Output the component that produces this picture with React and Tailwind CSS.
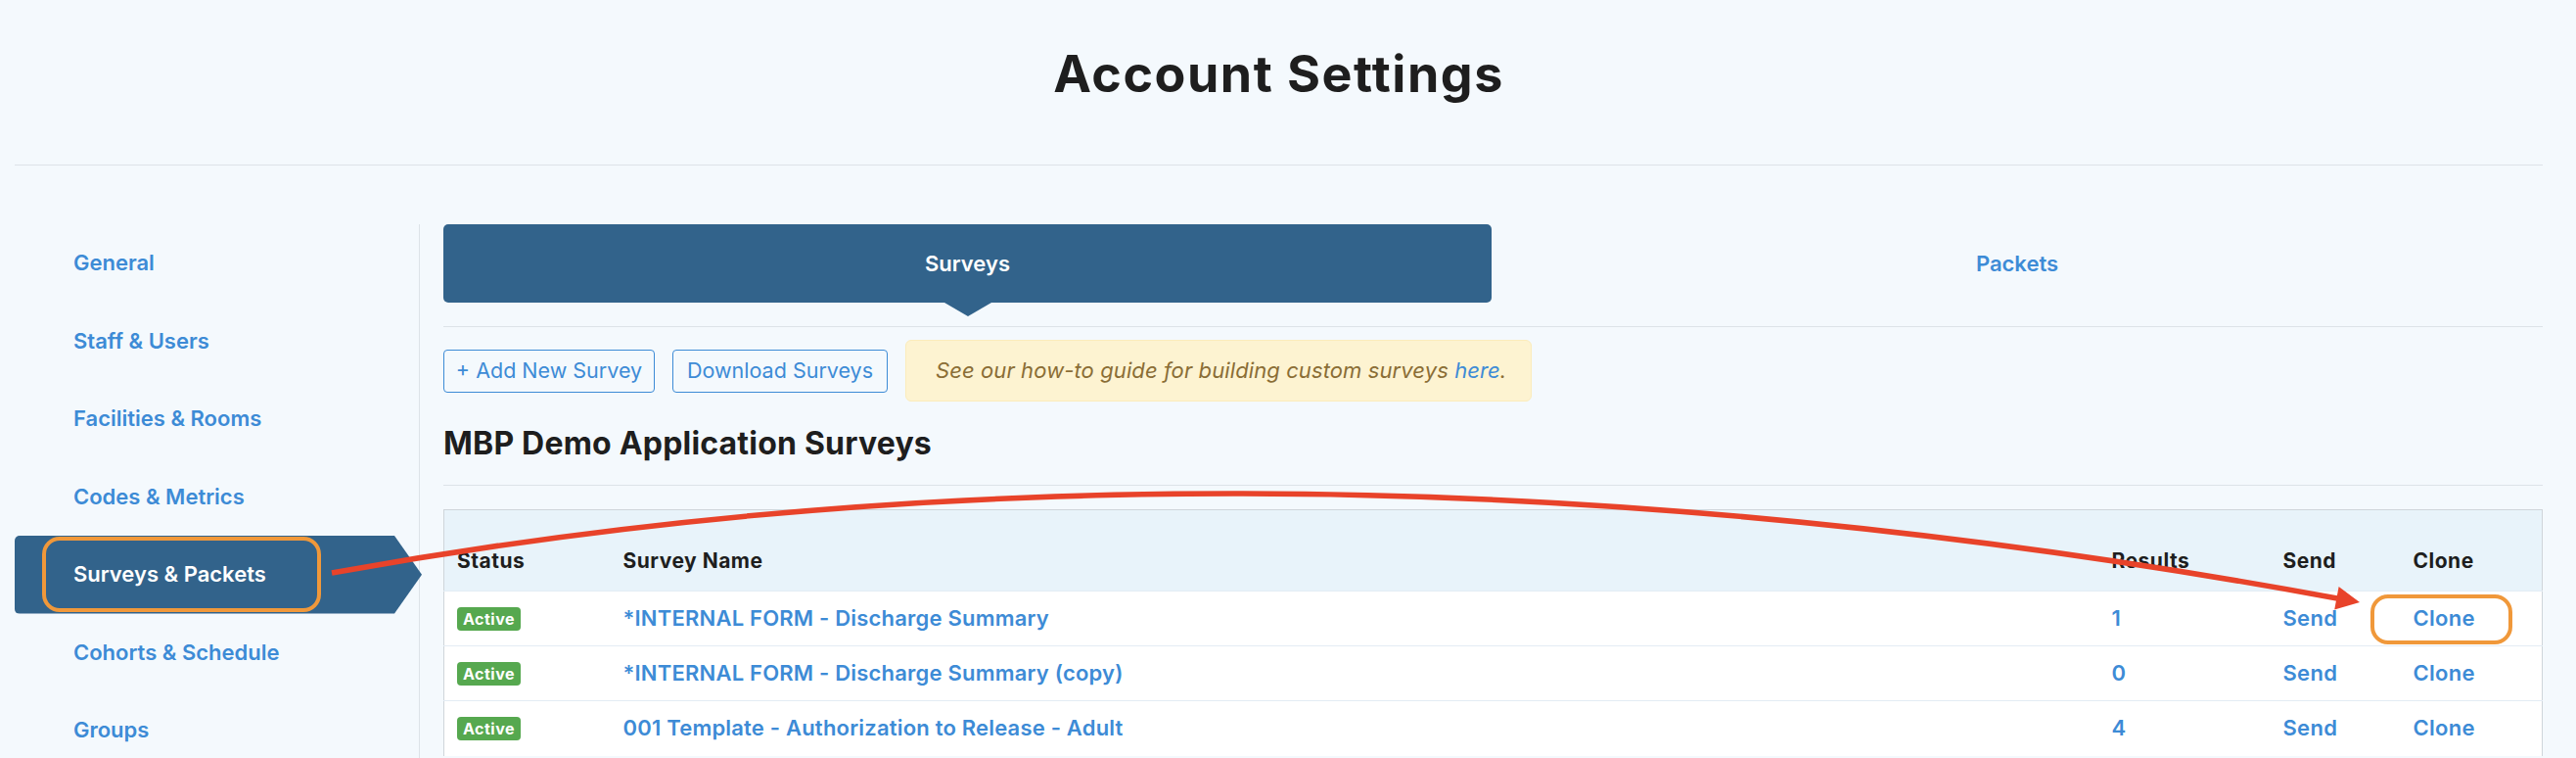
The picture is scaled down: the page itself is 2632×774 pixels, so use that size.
const nav = [
  "General",
  "Staff & Users",
  "Facilities & Rooms",
  "Codes & Metrics",
  "Surveys & Packets",
  "Cohorts & Schedule",
  "Groups",
];

const rows = [
  { name: "*INTERNAL FORM - Discharge Summary", results: "1", highlight: true },
  { name: "*INTERNAL FORM - Discharge Summary (copy)", results: "0" },
  { name: "001 Template - Authorization to Release - Adult", results: "4" },
];

function SideItem({ label }) {
  if (label === "Surveys & Packets") {
    return (
      <div className="relative flex h-[79.5px] w-[416px] items-center rounded-l-[5px] bg-[#32638b] pl-[60px] text-[22px] font-semibold text-white [clip-path:polygon(0_0,388px_0,416px_50%,388px_100%,0_100%)]">
        {label}
        <span className="absolute left-[28px] top-[1px] h-[77px] w-[285px] rounded-[18px] border-[4.5px] border-[#f0983a]" />
      </div>
    );
  }
  return (
    <div className="flex h-[79.5px] items-center pl-[60px] text-[22px] font-semibold text-[#3d8bd6]">
      {label}
    </div>
  );
}

export default function App() {
  return (
    <div className="relative h-[774px] w-[2632px] overflow-hidden bg-[#f4f9fd] text-[#1e1e1e] [font-family:Inter,'Noto_Sans',sans-serif]">
      <div className="ml-[15px] w-[2583px]">
        <header className="border-b border-[#dde3e8] pb-[66px] pt-[50px] text-center">
          <h1 className="text-[52px] font-bold leading-none tracking-[1.5px] text-[#1e1e1e]">
            Account Settings
          </h1>
        </header>

        <div className="flex pt-[60px]">
          <aside className="w-[414px] shrink-0 border-r border-[#dde3e8]">
            {nav.map((n) => (
              <SideItem key={n} label={n} />
            ))}
          </aside>

          <main className="flex-1 pl-[24px]">
            <div className="flex border-b border-[#dde3e8] pb-[24px]">
              <div className="relative flex h-[80px] w-[1071px] items-center justify-center rounded-[5px] bg-[#32638b] text-[22px] font-semibold text-white">
                Surveys
                <span className="absolute left-1/2 top-full -translate-x-1/2 border-x-[24px] border-t-[14px] border-x-transparent border-t-[#32638b]" />
              </div>
              <div className="flex h-[80px] flex-1 items-center justify-center text-[22px] font-semibold text-[#3d8bd6]">
                Packets
              </div>
            </div>

            <div className="mt-[13px] flex items-center gap-[18px]">
              <button className="h-[44px] w-[216px] rounded-[4px] border border-[#3d8bd6] text-[21.5px] text-[#3d8bd6]">
                + Add New Survey
              </button>
              <button className="h-[44px] w-[220px] rounded-[4px] border border-[#3d8bd6] text-[21.5px] text-[#3d8bd6]">
                Download Surveys
              </button>
              <div className="flex h-[63px] w-[640px] items-center rounded-[6px] border border-[#fbecbb] bg-[#fdf3d1] px-[30px]">
                <p className="whitespace-nowrap text-[22px] italic tracking-[0.1px] text-[#8a6d35]">
                  See our how-to guide for building custom surveys{" "}
                  <span className="text-[#3d8bd6]">here</span>.
                </p>
              </div>
            </div>

            <h2 className="mt-[27px] border-b border-[#dde3e8] pb-[26px] text-[32px] font-bold leading-none tracking-[0.2px] text-[#1e1e1e]">
              MBP Demo Application Surveys
            </h2>

            <table className="mt-[24px] w-[2145px] table-fixed border-collapse border-x border-t border-[#cfd5da]">
              <colgroup>
                <col className="w-[170px]" />
                <col />
                <col className="w-[175px]" />
                <col className="w-[133px]" />
                <col className="w-[145px]" />
              </colgroup>
              <thead>
                <tr className="bg-[#e8f3fa]">
                  {["Status", "Survey Name", "Results", "Send", "Clone"].map((h) => (
                    <th
                      key={h}
                      className="h-[83px] pb-[16px] pl-[13px] text-left align-bottom text-[21px] font-bold leading-[28px] tracking-[0.5px] text-[#1e1e1e]"
                    >
                      {h}
                    </th>
                  ))}
                </tr>
              </thead>
              <tbody>
                {rows.map((r) => (
                  <tr key={r.name} className="border-t border-[#e3ecf4] bg-white">
                    <td className="h-[56px] pl-[13px] align-middle">
                      <span className="inline-flex h-[24px] items-center rounded-[4px] bg-[#56a84f] px-[6px] text-[16px] font-bold tracking-[0.5px] text-white">
                        Active
                      </span>
                    </td>
                    <td className="pl-[13px] align-middle text-[22px] font-semibold tracking-[0.2px] text-[#3d8bd6]">
                      {r.name}
                    </td>
                    <td className="pl-[13px] align-middle text-[22px] font-semibold text-[#3d8bd6]">
                      {r.results}
                    </td>
                    <td className="pl-[13px] align-middle text-[22px] font-semibold tracking-[0.3px] text-[#3d8bd6]">
                      Send
                    </td>
                    <td className="relative pl-[13px] align-middle text-[22px] font-semibold tracking-[0.3px] text-[#3d8bd6]">
                      Clone
                      {r.highlight && (
                        <span className="absolute left-[-31px] top-[3px] h-[51px] w-[145px] rounded-[18px] border-[4.5px] border-[#f0983a]" />
                      )}
                    </td>
                  </tr>
                ))}
              </tbody>
            </table>
          </main>
        </div>
      </div>

      <svg
        className="pointer-events-none absolute left-0 top-0"
        width="2632"
        height="774"
        viewBox="0 0 2632 774"
      >
        <path d="M339 585 Q1300 411 2388 611" fill="none" stroke="#e8432a" strokeWidth="5.5" />
        <polygon points="2411,615 2389.6,598.9 2385.2,622.5" fill="#e8432a" />
      </svg>
    </div>
  );
}
